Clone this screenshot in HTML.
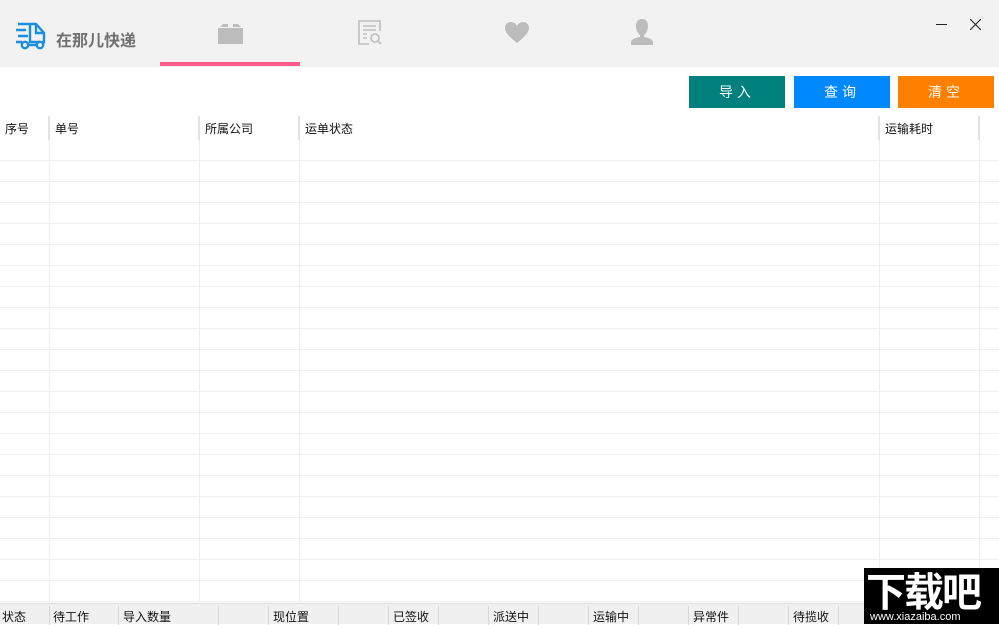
<!DOCTYPE html>
<html><head><meta charset="utf-8"><style>
*{margin:0;padding:0;box-sizing:border-box}
body{width:999px;height:624px;overflow:hidden;background:#fff;position:relative;font-family:"Liberation Sans","Microsoft YaHei","Noto Sans CJK SC",sans-serif;font-size:12px;color:#111}
.top{position:absolute;left:0;top:0;width:999px;height:67px;background:#f2f2f2}
.abs{position:absolute}
.btn{position:absolute;top:76px;height:32px;width:96px;color:#fff;font-size:14px;text-align:center;line-height:32px;letter-spacing:4px}
.grid{position:absolute;left:0;top:140px;width:999px;height:462px;
background-image:repeating-linear-gradient(to bottom,transparent 0,transparent 20px,#eeeeee 20px,#eeeeee 21px)}
.vl{position:absolute;width:1px;background:#efefef;top:140px;height:462px}
.hs{position:absolute;width:2px;background:#e2e2e2;top:116px;height:24px}
.th{position:absolute;top:120px;font-size:12px}
.status{position:absolute;left:0;top:603px;width:999px;height:21px;background:#f0f0f0;border-top:1px solid #ddd}
.sv{position:absolute;top:2px;width:1px;height:19px;background:#d6d6d6}
.st{position:absolute;top:4px;font-size:12px}
</style></head><body>
<div class="top"></div>
<svg class="abs" style="left:14px;top:21px" width="36" height="30" viewBox="0 0 36 30" fill="none" stroke="#1a8fe0" stroke-width="2.4">
<path d="M4 3h12M2 9h10M4 15h10M2 21h6"/><path d="M16 3v18H26M16 3h6l8 9v9h-2"/><path d="M22 3v9h8"/>
<circle cx="11" cy="24" r="3.2"/><circle cx="26" cy="24" r="3.2"/><path d="M15 24h7"/></svg>
<div class="abs" style="left:56px;top:27px;font-size:16px;font-weight:bold;color:#707070">在那儿快递</div>
<svg class="abs" style="left:218px;top:23px" width="25" height="21" viewBox="0 0 25 21"><path d="M2 4l3-3h5v3zM15 1h5l3 3h-8z M0 5h25v16H0z" fill="#bcbcbc"/></svg>
<svg class="abs" style="left:358px;top:20px" width="25" height="26" viewBox="0 0 25 26" fill="none" stroke="#bdbdbd" stroke-width="1.6"><path d="M11 24H1V1h21v10"/><path d="M5 6h13M5 10h13M5 14h4M5 18h4"/><circle cx="17" cy="18" r="4"/><path d="M20 21l3 3"/></svg>
<svg class="abs" style="left:505px;top:22px" width="24" height="22" viewBox="0 0 24 22"><path d="M12 21C5 15 0 11 0 6 0 2 3 0 6 0c3 0 5 2 6 4 1-2 3-4 6-4 3 0 6 2 6 6 0 5-5 9-12 15z" fill="#bcbcbc"/></svg>
<svg class="abs" style="left:631px;top:19px" width="22" height="26" viewBox="0 0 22 26"><path d="M11 0c4 0 6 3 6 7 0 4-2 8-4 9v2c6 1 9 3 9 5v3H0v-3c0-2 3-4 9-5v-2C7 15 5 11 5 7c0-4 2-7 6-7z" fill="#bcbcbc"/></svg>
<div class="abs" style="left:160px;top:62px;width:140px;height:4px;background:#ff5b8c"></div>
<div class="abs" style="left:936px;top:24px;width:11px;height:1px;background:#222"></div>
<svg class="abs" style="left:970px;top:19px" width="11" height="11" viewBox="0 0 11 11" stroke="#222" stroke-width="1.1"><path d="M0 0l11 11M11 0L0 11"/></svg>
<div class="btn" style="left:689px;background:#00807d">导入</div>
<div class="btn" style="left:794px;background:#0088ff">查询</div>
<div class="btn" style="left:898px;background:#ff7f00">清空</div>
<div class="th" style="left:5px">序号</div>
<div class="th" style="left:55px">单号</div>
<div class="th" style="left:205px">所属公司</div>
<div class="th" style="left:305px">运单状态</div>
<div class="th" style="left:885px">运输耗时</div>
<div class="hs" style="left:48px"></div><div class="hs" style="left:198px"></div><div class="hs" style="left:298px"></div><div class="hs" style="left:878px"></div><div class="hs" style="left:978px"></div>
<div class="grid"></div>
<div class="vl" style="left:49px"></div><div class="vl" style="left:199px"></div><div class="vl" style="left:299px"></div><div class="vl" style="left:879px"></div><div class="vl" style="left:979px"></div>
<div class="status">
<div class="st" style="left:2px">状态</div><div class="sv" style="left:49px"></div>
<div class="st" style="left:53px">待工作</div><div class="sv" style="left:118px"></div>
<div class="st" style="left:123px">导入数量</div><div class="sv" style="left:218px"></div><div class="sv" style="left:268px"></div>
<div class="st" style="left:273px">现位置</div><div class="sv" style="left:338px"></div><div class="sv" style="left:388px"></div>
<div class="st" style="left:393px">已签收</div><div class="sv" style="left:438px"></div><div class="sv" style="left:488px"></div>
<div class="st" style="left:493px">派送中</div><div class="sv" style="left:538px"></div><div class="sv" style="left:588px"></div>
<div class="st" style="left:593px">运输中</div><div class="sv" style="left:638px"></div><div class="sv" style="left:688px"></div>
<div class="st" style="left:693px">异常件</div><div class="sv" style="left:738px"></div><div class="sv" style="left:788px"></div>
<div class="st" style="left:793px">待揽收</div><div class="sv" style="left:838px"></div>
</div>
<div class="abs" style="left:864px;top:568px;width:135px;height:56px;background:#000;color:#fff">
<div style="position:absolute;left:2px;top:-2px;font-size:40px;font-weight:bold;letter-spacing:-2px;line-height:46px;font-family:'WenQuanYi Zen Hei','Noto Sans CJK SC',sans-serif">下载吧</div>
<div style="position:absolute;left:6px;top:43px;font-size:11px;line-height:12px">www.xiazaiba.com</div>
</div>
</body></html>
